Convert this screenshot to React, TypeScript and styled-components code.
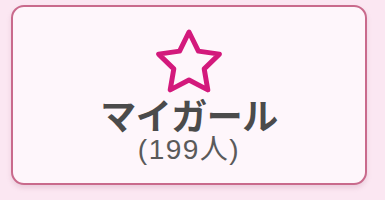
import React from "react";
import styled, { createGlobalStyle } from "styled-components";

const GlobalStyle = createGlobalStyle`
  html, body {
    margin: 0;
    padding: 0;
    background: #fbe7f2;
  }
  body {
    font-family: "Noto Sans CJK JP", "Noto Sans", sans-serif;
  }
`;

const Page = styled.div`
  width: 385px;
  height: 200px;
  padding: 5px 18px 0 11px;
  box-sizing: border-box;
`;

const Card = styled.div`
  width: 356px;
  height: 180px;
  box-sizing: border-box;
  border: 2px solid #c96a8c;
  border-radius: 13px;
  background: #fef6fb;
  box-shadow: 0 3px 5px rgba(160, 90, 120, 0.18);
  display: flex;
  flex-direction: column;
  align-items: center;
  padding-top: 21px;
`;

const Title = styled.div`
  font-size: 36px;
  font-weight: 700;
  color: #4b4b4b;
  line-height: 36px;
  letter-spacing: -0.5px;
`;

const Count = styled.div`
  font-family: "Liberation Sans", "Noto Sans CJK JP", sans-serif;
  font-size: 28px;
  font-weight: 400;
  color: #5a5a5a;
  line-height: 30px;
  letter-spacing: 1.5px;
  margin-top: 3px;
`;

const StarIcon = () => (
  <svg width="72" height="68" viewBox="0 0 72 68">
    <polygon
      points="36,4 45.4,23.1 66.4,26.1 51.2,40.9 54.8,61.9 36,52 17.2,61.9 20.8,40.9 5.6,26.1 26.6,23.1"
      fill="none"
      stroke="#d3197c"
      strokeWidth="5"
      strokeLinejoin="round"
    />
  </svg>
);

export default function App() {
  return (
    <>
      <GlobalStyle />
      <Page>
        <Card>
          <StarIcon />
          <Title>マイガール</Title>
          <Count>(199人)</Count>
        </Card>
      </Page>
    </>
  );
}
